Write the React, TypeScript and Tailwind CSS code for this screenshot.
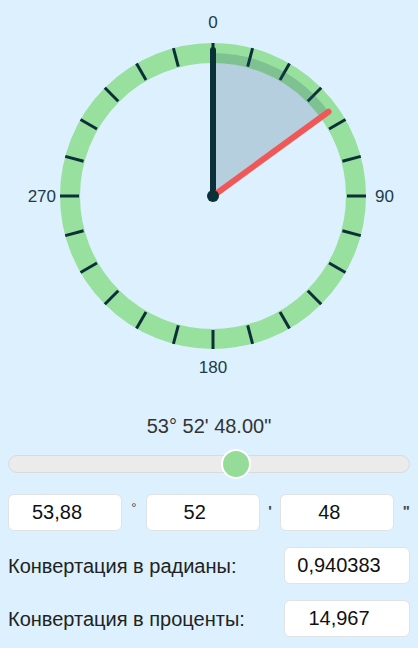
import { useState } from 'react';

const CX = 213;
const CY = 196;
const R_RING = 143;
const R_OUT = 153;
const R_IN = 134;

function polar(r: number, deg: number) {
  const a = ((deg - 90) * Math.PI) / 180;
  return [CX + r * Math.cos(a), CY + r * Math.sin(a)];
}

function Dial({ angle }: { angle: number }) {
  const ticks = Array.from({ length: 24 }, (_, i) => i * 15);
  const [ex, ey] = polar(R_RING, angle);
  const [hx, hy] = polar(146, 0);
  const large = angle > 180 ? 1 : 0;
  const sector = `M ${CX} ${CY} L ${CX} ${CY - R_RING} A ${R_RING} ${R_RING} 0 ${large} 1 ${ex} ${ey} Z`;

  return (
    <svg width="418" height="386" viewBox="0 0 418 386" className="block">
      <circle cx={CX} cy={CY} r={R_RING} fill="none" stroke="#98e09d" strokeWidth={20} />
      {ticks.map((t) => {
        const [x1, y1] = polar(R_IN, t);
        const [x2, y2] = polar(R_OUT, t);
        return <line key={t} x1={x1} y1={y1} x2={x2} y2={y2} stroke="#0d2f3a" strokeWidth={3} />;
      })}
      <path d={sector} fill="#1b4a6b" fillOpacity={0.2} />
      <line x1={CX} y1={CY} x2={hx} y2={hy} stroke="#0b3038" strokeWidth={6} strokeLinecap="round" />
      <line x1={CX} y1={CY} x2={ex} y2={ey} stroke="#f05858" strokeWidth={6} strokeLinecap="round" />
      <circle cx={CX} cy={CY} r={6} fill="#0b3038" />
      <g fill="#1c3a4c" fontFamily="'Liberation Sans', Arial, sans-serif" fontSize="17">
        <text x={CX} y={28} textAnchor="middle">0</text>
        <text x={375} y={202}>90</text>
        <text x={56} y={202} textAnchor="end">270</text>
        <text x={CX} y={373} textAnchor="middle">180</text>
      </g>
    </svg>
  );
}

function Field({ value, className = '' }: { value: string; className?: string }) {
  return (
    <input
      readOnly
      value={value}
      className={`h-[37px] rounded-md border border-[#dfe3e6] bg-white pl-2 pr-6 text-center text-[20px] text-[#111] outline-none ${className}`}
    />
  );
}

export default function App() {
  const [deg] = useState(53.88);

  return (
    <div className="h-[648px] w-[418px] overflow-hidden bg-[#dcf0fd] font-['Liberation_Sans',Arial,sans-serif] text-[#222]">
      <Dial angle={deg} />

      <div className="mt-[30px] text-center text-[20px] leading-5 text-[#333]">53° 52' 48.00"</div>

      {/* slider */}
      <div className="relative mx-2 mt-[19px] h-[18px] rounded-full border border-[#dadada] bg-[#ebebeb]">
        <div className="absolute left-[212px] top-[-7px] h-[30px] w-[30px] rounded-full border-2 border-white bg-[#96dc99]" />
      </div>

      {/* degrees / minutes / seconds */}
      <div className="mt-[21px] flex items-start pl-2">
        <Field value="53,88" className="w-[114px]" />
        <span className="w-6 pt-[4px] text-center text-[13px] text-[#444]">°</span>
        <Field value="52" className="w-[114px]" />
        <span className="w-[21px] pt-[6px] text-center text-[15px] font-bold text-[#444]">'</span>
        <Field value="48" className="w-[114px]" />
        <span className="w-6 pt-[6px] text-center text-[15px] font-bold text-[#444]">"</span>
      </div>

      <div className="mt-4 flex items-center justify-between px-2">
        <span className="text-[20px] text-[#222]">Конвертация в радианы:</span>
        <Field value="0,940383" className="w-[126px]" />
      </div>

      <div className="mt-4 flex items-center justify-between px-2">
        <span className="text-[20px] text-[#222]">Конвертация в проценты:</span>
        <Field value="14,967" className="w-[126px]" />
      </div>
    </div>
  );
}
